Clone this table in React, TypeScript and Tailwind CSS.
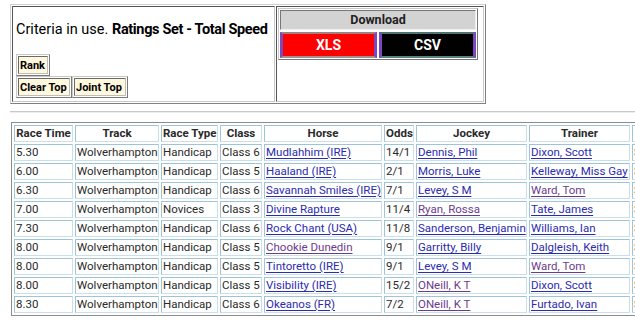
import React from "react";

type Row = {
  time: string;
  track: string;
  type: string;
  cls: string;
  horse: string;
  horseV?: boolean;
  odds: string;
  jockey: string;
  jockeyV?: boolean;
  trainer: string;
  trainerV?: boolean;
  extra: string;
};

const rows: Row[] = [
  { time: "5.30", track: "Wolverhampton", type: "Handicap", cls: "Class 6", horse: "Mudlahhim (IRE)", odds: "14/1", jockey: "Dennis, Phil", trainer: "Dixon, Scott", extra: "S" },
  { time: "6.00", track: "Wolverhampton", type: "Handicap", cls: "Class 5", horse: "Haaland (IRE)", odds: "2/1", jockey: "Morris, Luke", trainer: "Kelleway, Miss Gay", extra: "S" },
  { time: "6.30", track: "Wolverhampton", type: "Handicap", cls: "Class 6", horse: "Savannah Smiles (IRE)", odds: "7/1", jockey: "Levey, S M", trainer: "Ward, Tom", trainerV: true, extra: "S" },
  { time: "7.00", track: "Wolverhampton", type: "Novices", cls: "Class 3", horse: "Divine Rapture", odds: "11/4", jockey: "Ryan, Rossa", jockeyV: true, trainer: "Tate, James", extra: "S" },
  { time: "7.30", track: "Wolverhampton", type: "Handicap", cls: "Class 6", horse: "Rock Chant (USA)", odds: "11/8", jockey: "Sanderson, Benjamin", trainer: "Williams, Ian", extra: "S" },
  { time: "8.00", track: "Wolverhampton", type: "Handicap", cls: "Class 5", horse: "Chookie Dunedin", horseV: true, odds: "9/1", jockey: "Garritty, Billy", trainer: "Dalgleish, Keith", extra: "S" },
  { time: "8.00", track: "Wolverhampton", type: "Handicap", cls: "Class 5", horse: "Tintoretto (IRE)", odds: "9/1", jockey: "Levey, S M", trainer: "Ward, Tom", trainerV: true, extra: "S" },
  { time: "8.00", track: "Wolverhampton", type: "Handicap", cls: "Class 5", horse: "Visibility (IRE)", odds: "15/2", jockey: "ONeill, K T", jockeyV: true, trainer: "Dixon, Scott", extra: "S" },
  { time: "8.30", track: "Wolverhampton", type: "Handicap", cls: "Class 6", horse: "Okeanos (FR)", odds: "7/2", jockey: "ONeill, K T", jockeyV: true, trainer: "Furtado, Ivan", extra: "S" },
];

const td =
  "border border-t-[#9fc3d8] border-l-[#9fc3d8] border-r-[#c9e0ec] border-b-[#c9e0ec] px-[1px] h-[17px] leading-[15px] whitespace-nowrap overflow-hidden text-left align-middle";
const th =
  "border border-t-[#9fc3d8] border-l-[#9fc3d8] border-r-[#c9e0ec] border-b-[#c9e0ec] px-[1px] h-[17px] leading-[15px] whitespace-nowrap overflow-hidden text-center font-bold align-middle";

function L({ children, v }: { children: React.ReactNode; v?: boolean }) {
  return (
    <a
      href="#"
      className={
        v
          ? "text-[#6b3c8e] underline underline-offset-[2px]"
          : "text-[#2b2bb0] underline underline-offset-[2px]"
      }
    >
      {children}
    </a>
  );
}

function Btn({ label, w }: { label: string; w: string }) {
  return (
    <div className={`${w} h-[22px] border border-t-[#c8c8c8] border-l-[#c8c8c8] border-r-[#7a7a7a] border-b-[#7a7a7a] p-[1px]`}>
      <div className="h-full border border-t-[#6a6a6a] border-l-[#6a6a6a] border-r-[#bdbdbd] border-b-[#bdbdbd] bg-[#fff8dc] flex items-center px-[1px] text-[11px] font-bold text-black leading-none whitespace-nowrap overflow-hidden">
        {label}
      </div>
    </div>
  );
}

export default function App() {
  return (
    <div
      className="w-[635px] h-[331px] overflow-hidden bg-white text-[#222]"
      style={{ fontFamily: "Roboto, 'Noto Sans', Arial, sans-serif" }}
    >
      {/* top criteria table */}
      <div className="ml-[10px] mt-[4px] w-[476px] h-[100px] border border-t-[#d0d0d0] border-l-[#d0d0d0] border-r-[#808080] border-b-[#808080] p-[1px] flex gap-[1px]">
        <div className="w-[263px] h-full border border-t-[#555] border-l-[#555] border-r-[#c8c8c8] border-b-[#c8c8c8] pl-[3px] pt-[14px]">
          <div className="text-[14.5px] leading-[17px] whitespace-nowrap text-black">
            Criteria in use.{" "}
            <span className="font-bold tracking-[-0.35px]">Ratings Set - Total Speed</span>
          </div>
          <div className="mt-[16px] flex">
            <Btn label="Rank" w="w-[34px]" />
          </div>
          <div className="flex">
            <Btn label="Clear Top" w="w-[56px]" />
            <Btn label="Joint Top" w="w-[56px]" />
          </div>
        </div>
        <div className="flex-1 h-full border border-t-[#555] border-l-[#555] border-r-[#c8c8c8] border-b-[#c8c8c8] pt-[1px] pl-[1px]">
          <div className="w-[200px] border border-t-[#c8c8c8] border-l-[#c8c8c8] border-r-[#777] border-b-[#777] p-[1px] flex flex-col gap-[2px]">
            <div className="h-[20px] bg-[#d3d3d3] border border-t-[#777] border-l-[#777] border-r-[#eee] border-b-[#eee] flex items-center justify-center text-[12.5px] font-bold text-[#222]">
              Download
            </div>
            <div className="flex gap-[2px]">
              <div className="w-[97px] h-[26px] border-y-2 border-x-[3px] border-t-[#a08080] border-b-[#a09090] border-x-[#7a48c0] bg-[#ff0000] flex items-center justify-center text-white font-bold text-[14px]">
                XLS
              </div>
              <div className="w-[97px] h-[26px] border-y-2 border-x-[3px] border-t-[#4d7373] border-b-[#5a8080] border-x-[#7a48c0] bg-black flex items-center justify-center text-white font-bold text-[14px]">
                CSV
              </div>
            </div>
          </div>
        </div>
      </div>

      {/* hr */}
      <div className="ml-[10px] mt-[7px] h-[2px] border-t border-t-[#c8c8c8] border-b border-b-[#ececec]" />

      {/* main table */}
      <div className="mt-[9px] ml-[11px]">
        <table
          className="table-fixed border-separate border border-[#8c8c8c] text-[11.5px] text-[#2a2a2a] w-[734px]"
          style={{ borderSpacing: "2px" }}
        >
          <colgroup>
            <col className="w-[59px]" />
            <col className="w-[84px]" />
            <col className="w-[57px]" />
            <col className="w-[42px]" />
            <col className="w-[118px]" />
            <col className="w-[30px]" />
            <col className="w-[111px]" />
            <col className="w-[101px]" />
            <col className="w-[110px]" />
          </colgroup>
          <thead>
            <tr>
              <th className={th}>Race Time</th>
              <th className={th}>Track</th>
              <th className={th}>Race Type</th>
              <th className={th}>Class</th>
              <th className={th}>Horse</th>
              <th className={th}>Odds</th>
              <th className={th}>Jockey</th>
              <th className={th}>Trainer</th>
              <th className={th}>Sire</th>
            </tr>
          </thead>
          <tbody>
            {rows.map((r, i) => (
              <tr key={i}>
                <td className={td}>{r.time}</td>
                <td className={td}>{r.track}</td>
                <td className={td}>{r.type}</td>
                <td className={td}>{r.cls}</td>
                <td className={td}>
                  <L v={r.horseV}>{r.horse}</L>
                </td>
                <td className={td}>{r.odds}</td>
                <td className={td}>
                  <L v={r.jockeyV}>{r.jockey}</L>
                </td>
                <td className={td}>
                  <L v={r.trainerV}>{r.trainer}</L>
                </td>
                <td className={td}>Speed</td>
              </tr>
            ))}
          </tbody>
        </table>
      </div>
    </div>
  );
}
